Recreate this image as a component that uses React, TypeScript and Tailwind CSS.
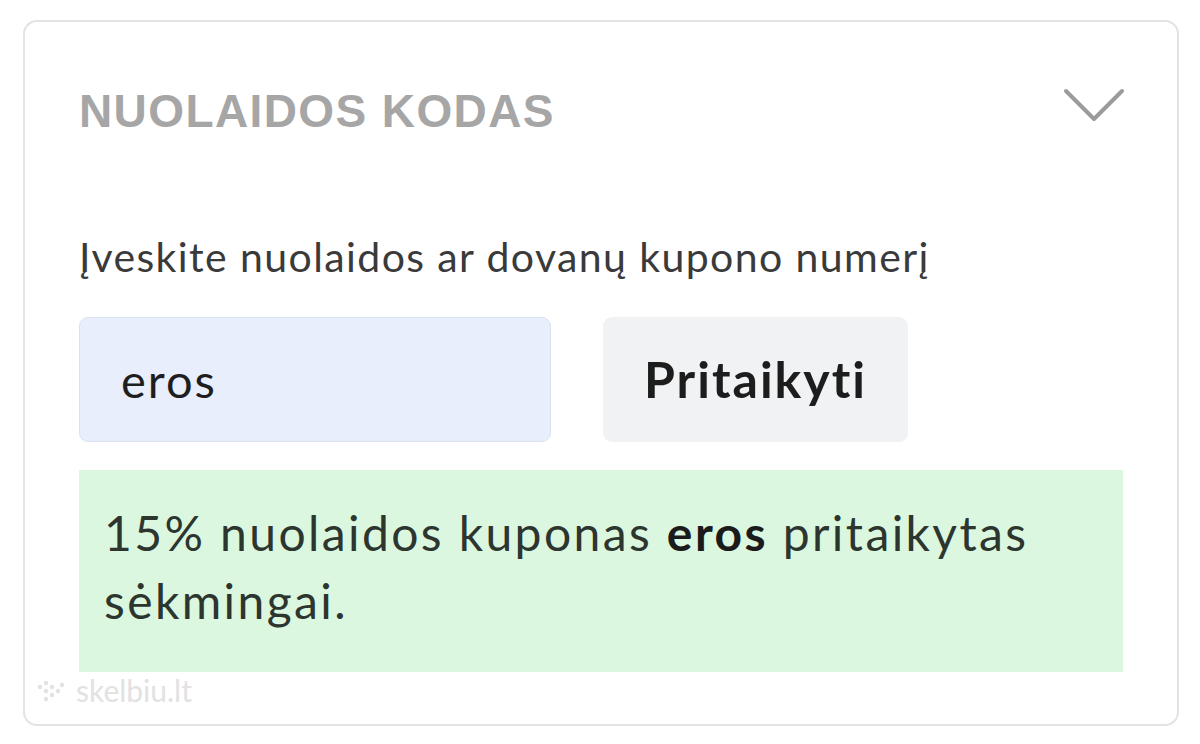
import { useState } from "react";

const body = { fontFamily: "Lato, 'Noto Sans', sans-serif" };

const Chevron = () => (
    <svg width="62" height="36" viewBox="0 0 62 36" fill="none">
        <path d="M3 3 L31 31 L59 3" stroke="#9b9b9b" strokeWidth="4" strokeLinecap="round" strokeLinejoin="round" />
    </svg>
);

// dotted mark next to the watermark text
const DotsMark = () => (
    <svg width="34" height="26" viewBox="0 0 34 26" fill="#e2e2e2">
        <circle cx="6" cy="9" r="2.2" />
        <circle cx="12" cy="5" r="2.2" />
        <circle cx="18" cy="9" r="2.2" />
        <circle cx="12" cy="13" r="2.2" />
        <circle cx="24" cy="13" r="2.2" />
        <circle cx="18" cy="17" r="2.2" />
        <circle cx="12" cy="21" r="2.2" />
        <circle cx="28" cy="7" r="2.2" />
    </svg>
);

export default function App() {
    const [code, setCode] = useState("eros");

    return (
        <div className="w-[1200px] h-[744px] bg-white pt-[20px] pl-[23px] relative">
            <div className="w-[1156px] h-[706px] border-2 border-[#e3e3e3] rounded-[14px] px-[54px] pt-[49px]">
                {/* Header */}
                <div className="flex items-center justify-between h-[80px]">
                    <h2
                        className="text-[46px] font-bold text-[#a6a6a6] tracking-[1.4px]"
                        style={{ fontFamily: "'Liberation Sans', Arial, sans-serif" }}
                    >
                        NUOLAIDOS KODAS
                    </h2>
                    <div className="-mr-[2px] -mt-[10px]">
                        <Chevron />
                    </div>
                </div>

                {/* Coupon form */}
                <p className="mt-[85px] text-[41px] tracking-[1.4px] text-[#3a3a3a] leading-none" style={body}>
                    Įveskite nuolaidos ar dovanų kupono numerį
                </p>
                <div className="flex gap-[52px] mt-[40px]">
                    <input
                        value={code}
                        onChange={(e) => setCode(e.target.value)}
                        className="w-[472px] h-[125px] bg-[#e8eefb] border border-[#d9e2f1] rounded-[9px] px-[41px] text-[47px] tracking-[2px] text-[#1e1e1e] outline-none"
                        style={body}
                    />
                    <button
                        className="w-[305px] h-[125px] bg-[#f1f2f4] rounded-[9px] text-[50px] tracking-[2px] font-bold text-[#1d1d1d]"
                        style={body}
                    >
                        Pritaikyti
                    </button>
                </div>

                {/* Success message */}
                <div className="mt-[28px] h-[202px] bg-[#dbf7df] pl-[25px] pr-[40px] pt-[29px]">
                    <p className="text-[48px] leading-[68px] tracking-[2.4px] text-[#2d352f]" style={body}>
                        15% nuolaidos kuponas <b className="font-bold text-[#1b1b1b]">eros</b> pritaikytas sėkmingai.
                    </p>
                </div>
            </div>

            {/* watermark */}
            <div className="absolute left-[34px] top-[668px] flex items-center gap-[8px] text-[#e2e2e2] text-[30px]" style={body}>
                <DotsMark />
                <span>skelbiu.lt</span>
            </div>
        </div>
    );
}
